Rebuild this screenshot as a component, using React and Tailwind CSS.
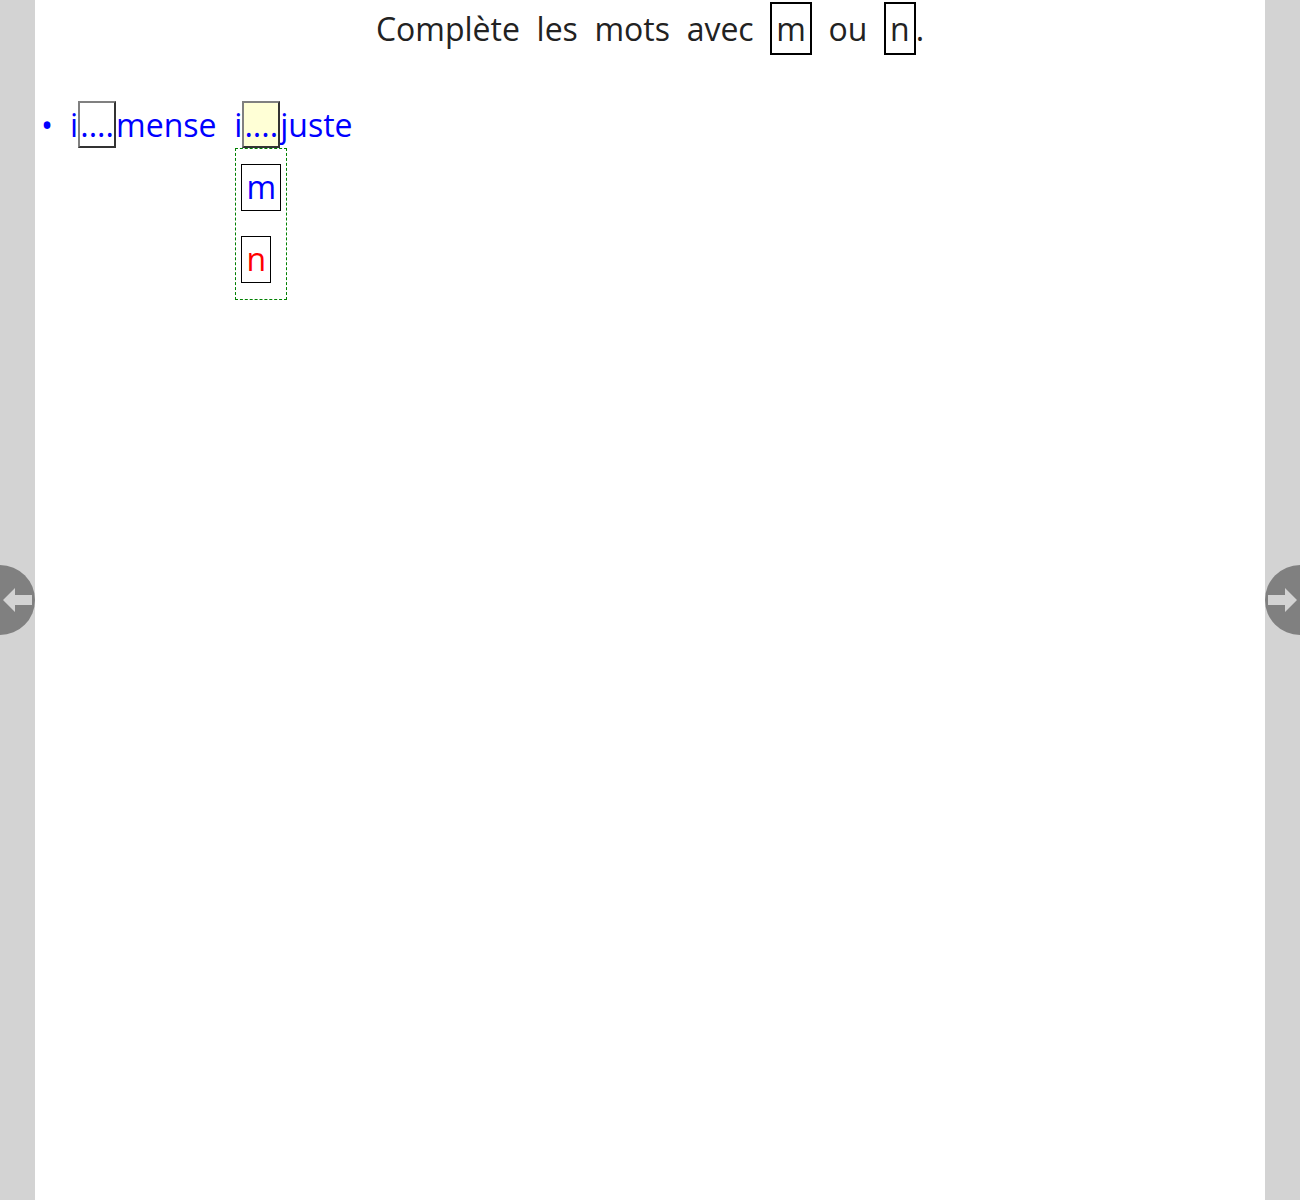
import React from 'react'

const Blank = ({ active = false }) => (
    <span
        className={
            "inline-block align-top w-[38px] h-[47px] border-2 border-t-[#808080] border-l-[#808080] border-r-[#333333] border-b-[#333333] overflow-hidden text-center leading-[44px] " +
            (active ? "bg-[#ffffd6]" : "bg-white")
        }
    >
        ....
    </span>
)

const Arrow = ({ dir }) => (
    <svg width="36" height="70" viewBox="0 0 36 70">
        {dir === 'left' ? (
            <>
                <circle cx="0" cy="35" r="35" fill="#808080" />
                <path d="M3 35 L15 23 L15 30 L32 30 L32 40 L15 40 L15 47 Z" fill="#d3d3d3" />
            </>
        ) : (
            <>
                <circle cx="36" cy="35" r="35" fill="#808080" />
                <path d="M33 35 L21 23 L21 30 L4 30 L4 40 L21 40 L21 47 Z" fill="#d3d3d3" />
            </>
        )}
    </svg>
)

export default function App() {
    return (
        <div className="relative min-h-[1200px] bg-[#d3d3d3] px-[35px]" style={{ fontFamily: '"Open Sans", sans-serif' }}>
            <div className="min-h-[1200px] bg-white">
                <h1 className="text-center text-[32px] text-[#222222] leading-[57px]">
                    Complète&nbsp;&nbsp;les&nbsp;&nbsp;mots&nbsp;&nbsp;avec&nbsp;&nbsp;
                    <span className="inline-block border-2 border-black px-[4px] leading-[49px]">m</span>
                    &nbsp;&nbsp;ou&nbsp;&nbsp;
                    <span className="inline-block border-2 border-black px-[4px] leading-[49px]">n</span>.
                </h1>

                <div className="relative mt-[44px] pl-[6px] text-[32px] text-[#0000ff] leading-[47px] flex items-start">
                    <span className="w-[29px]">•</span>
                    <span>i</span>
                    <Blank />
                    <span>mense&nbsp;&nbsp;</span>
                    <span className="ml-[1px]">i</span>
                    <span className="relative inline-block">
                        <Blank active />
                        <div className="absolute left-[-7px] top-[47px] w-[52px] h-[152px] border border-dashed border-[#008000] bg-white">
                            <div className="mt-[15px] ml-[5px] w-[40px] h-[47px] border border-black text-center leading-[44px]">m</div>
                            <div className="mt-[25px] ml-[5px] w-[30px] h-[47px] border border-black text-center leading-[44px] text-[#ff0000]">n</div>
                        </div>
                    </span>
                    <span>juste</span>
                </div>
            </div>

            <div className="absolute left-0 top-[565px]"><Arrow dir="left" /></div>
            <div className="absolute right-0 top-[565px]"><Arrow dir="right" /></div>
        </div>
    )
}
